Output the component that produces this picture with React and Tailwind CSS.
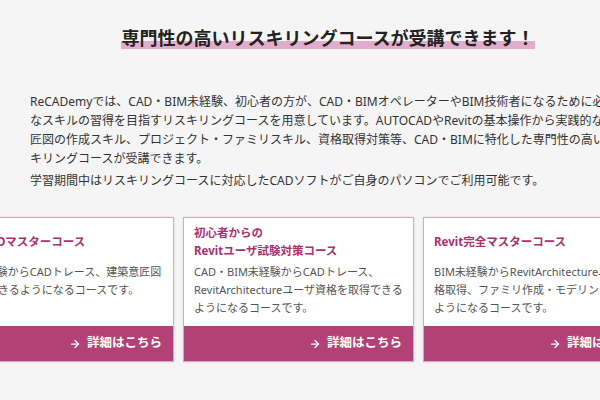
import React from "react";
import { ArrowRight } from "lucide-react";

const courses = [
  {
    title: ["AutoCADマスターコース"],
    body: ["BIM未経験からCADトレース、建築意匠図", "作成ができるようになるコースです。"],
  },
  {
    title: ["初心者からの", "Revitユーザ試験対策コース"],
    body: ["CAD・BIM未経験からCADトレース、", "RevitArchitectureユーザ資格を取得できる", "ようになるコースです。"],
  },
  {
    title: ["Revit完全マスターコース"],
    body: ["BIM未経験からRevitArchitectureユーザ資", "格取得、ファミリ作成・モデリングができる", "ようになるコースです。"],
  },
];

const intro = [
  "ReCADemyでは、CAD・BIM未経験、初心者の方が、CAD・BIMオペレーターやBIM技術者になるために必要",
  "なスキルの習得を目指すリスキリングコースを用意しています。AUTOCADやRevitの基本操作から実践的な意",
  "匠図の作成スキル、プロジェクト・ファミリスキル、資格取得対策等、CAD・BIMに特化した専門性の高いリス",
  "キリングコースが受講できます。",
];

const CourseCard = ({ course }) => (
  <div className="w-[231px] h-[145px] shrink-0 flex flex-col bg-white border border-[#dba7c5] shadow-[0_0_2px_rgba(0,0,0,0.12)]">
    <div className="h-[45px] px-[10px] pt-[2px] flex flex-col justify-center">
      {course.title.map((line) => (
        <p key={line} className="text-[11.5px] leading-[18px] font-bold text-[#a9326f] whitespace-nowrap">
          {line}
        </p>
      ))}
    </div>
    <div className="px-[10px]">
      {course.body.map((line) => (
        <p key={line} className="text-[11px] leading-[18px] text-[#555] whitespace-nowrap">
          {line}
        </p>
      ))}
    </div>
    <div className="mt-auto h-[35px] bg-[#b24276] flex items-center justify-end gap-[6px] pr-[11px] text-white">
      <ArrowRight size={12} strokeWidth={2.5} />
      <span className="text-[12.5px] font-bold">詳細はこちら</span>
    </div>
  </div>
);

const App = () => {
  return (
    <div className="w-[600px] h-[400px] overflow-hidden bg-[#f5f5f5] font-['Noto_Sans','Noto_Sans_CJK_JP',sans-serif]">
      <div className="ml-[30px] w-[596px] pt-[29px]">
        <div className="text-center leading-none">
          <span className="inline-block pb-[2px] text-[18px] leading-[18px] font-bold text-[#222] bg-[linear-gradient(transparent_60%,#e2adcb_60%)]">
            専門性の高いリスキリングコースが受講できます！
          </span>
        </div>
        <div className="mt-[43px] text-[12px] leading-[19px] text-[#333] whitespace-nowrap">
          {intro.map((line) => (
            <p key={line}>{line}</p>
          ))}
          <p className="mt-[3px]">学習期間中はリスキリングコースに対応したCADソフトがご自身のパソコンでご利用可能です。</p>
        </div>
      </div>
      <div className="mt-[27px] ml-[-57px] flex gap-[9px] w-max">
        {courses.map((course) => (
          <CourseCard key={course.title.join("")} course={course} />
        ))}
      </div>
    </div>
  );
};

export default App;
